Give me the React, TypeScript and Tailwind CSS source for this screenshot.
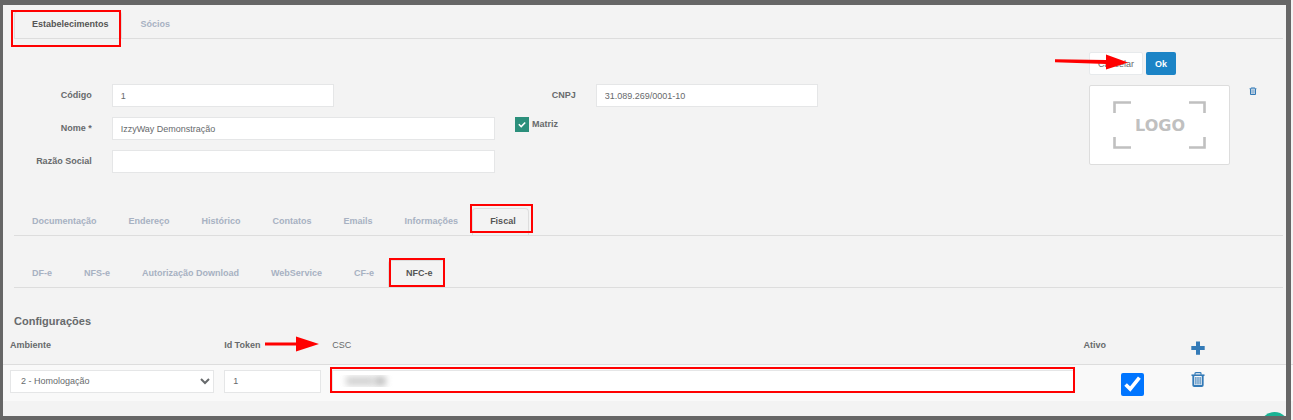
import type { ReactNode } from "react"

function TrashIcon({ className }: { className: string }) {
  return (
    <svg viewBox="0 0 14 15" className={className} fill="none" stroke="currentColor" aria-hidden="true">
      <path d="M4 2.8V1.4Q4 .7 4.8.7H9.2Q10 .7 10 1.4V2.8" strokeWidth="1.2" />
      <path d="M.5 3.2H13.5" strokeWidth="1.6" />
      <path d="M2.3 3.5V13.2Q2.3 14 3.2 14H10.8Q11.7 14 11.7 13.2V3.5" strokeWidth="1.9" />
      <path d="M4.9 5V12.6M7 5V12.6M9.1 5V12.6" strokeWidth="1.1" />
    </svg>
  )
}

function Highlight({ className }: { className: string }) {
  return <span className={`pointer-events-none absolute z-10 border-2 border-[#ff0000] ${className}`} />
}

type TabsProps = {
  label: string
  tabs: string[]
  active: string
  activeClass: string
  highlightClass: string
}

function TabBar({ label, tabs, active, activeClass, highlightClass }: TabsProps) {
  return (
    <div role="tablist" aria-label={label} className="ml-[11px] mr-[10px] flex border-b border-[#dddddd]">
      {tabs.map((tab) => (
        <button
          key={tab}
          type="button"
          role="tab"
          aria-selected={tab === active}
          className={`relative mr-px h-[27px] rounded-t-sm border border-b-0 pb-0.5 pl-[17px] pr-3 font-bold ${
            tab === active ? `border-[#dddddd] text-[#555555] ${activeClass}` : "border-transparent text-[#a7b1c2]"
          }`}
        >
          {tab}
          {tab === active && <Highlight className={highlightClass} />}
        </button>
      ))}
    </div>
  )
}

function Label({ htmlFor, children }: { htmlFor: string; children: ReactNode }) {
  return (
    <label htmlFor={htmlFor} className="whitespace-nowrap px-2.5 pt-[5px] text-right font-bold">
      {children}
    </label>
  )
}

const inputClass = "h-[23px] w-full border border-[#e5e6e7] bg-white px-2 outline-none"

export default function App() {
  return (
    <div className="relative overflow-hidden bg-[#f3f3f3] pb-[19px] pl-[3px] pt-[11px] font-['Liberation_Sans',Arial,sans-serif] text-[9px] leading-3 text-[#676a6c]">
      <TabBar
        label="Cadastro"
        tabs={["Estabelecimentos", "Sócios"]}
        active="Estabelecimentos"
        activeClass="-mb-px h-7 bg-[#f3f3f3]"
        highlightClass="-left-1 right-0 -top-0.5 h-[37px]"
      />

      <div className="ml-[18px] mr-2.5 mt-[13px] grid grid-cols-[968fr_294fr]">
        <div className="mt-8 grid grid-cols-12 content-start gap-y-2.5">
          <div className="flex justify-end">
            <Label htmlFor="codigo">Código</Label>
          </div>
          <div className="col-span-3 px-2.5">
            <input id="codigo" className={inputClass} defaultValue="1" />
          </div>
          <div className="col-start-7 flex justify-end">
            <Label htmlFor="cnpj">CNPJ</Label>
          </div>
          <div className="col-span-3 px-2.5">
            <input id="cnpj" className={inputClass} defaultValue="31.089.269/0001-10" />
          </div>

          <div className="col-start-1 flex justify-end">
            <Label htmlFor="nome">Nome *</Label>
          </div>
          <div className="col-span-5 px-2.5">
            <input id="nome" className={inputClass} defaultValue="IzzyWay Demonstração" />
          </div>
          <label className="col-span-2 flex items-start gap-[3px] px-2.5 font-bold">
            <span className="relative">
              <input type="checkbox" defaultChecked className="block h-[15px] w-3.5 appearance-none bg-[#2b8f7b]" />
              <svg viewBox="0 0 14 15" className="pointer-events-none absolute inset-0" fill="none" stroke="white" strokeWidth="1.5">
                <path d="M3.8 7.3 6.2 9.6 10.2 5.4" />
              </svg>
            </span>
            <span className="pt-px">Matriz</span>
          </label>

          <div className="col-start-1 flex justify-end">
            <Label htmlFor="razao">Razão Social</Label>
          </div>
          <div className="col-span-5 px-2.5">
            <input id="razao" className={inputClass} />
          </div>
        </div>

        <div className="pl-[100px]">
          <div className="relative flex gap-[3px]">
            <button type="button" className="h-[23px] rounded-xs border border-[#e7eaec] bg-white px-2">
              Cancelar
            </button>
            <button type="button" className="h-[23px] rounded-xs bg-[#1c84c6] px-[9px] font-bold text-white">
              Ok
            </button>
            <svg viewBox="0 0 76 16" className="pointer-events-none absolute -left-9 top-0.5 h-4 w-[76px]" fill="#ff0000">
              <path d="M2 5.2 53 6V.5L75 8.5 53 15.5V10L2 8.2Z" />
            </svg>
          </div>
          <div className="mt-2.5 flex items-start gap-[19px]">
            <div className="flex h-20 w-[141px] items-center justify-center rounded-xs border border-[#dddddd] bg-white">
              <svg viewBox="0 0 94 48" className="h-12 w-[94px]" role="img" aria-label="LOGO">
                <path
                  d="M1.5 12V1.5H18M76 1.5H91.5V12M91.5 36V46.5H76M18 46.5H1.5V36"
                  fill="none"
                  stroke="#c0c0c0"
                  strokeWidth="2.6"
                />
                <text
                  x="47"
                  y="30"
                  textAnchor="middle"
                  className="font-['DejaVu_Sans',sans-serif] text-[16px] font-bold"
                  fill="#c0c0c0"
                >
                  LOGO
                </text>
              </svg>
            </div>
            <button type="button" aria-label="Remover logo" className="mt-0.5 text-[#337ab7]">
              <TrashIcon className="h-2 w-2" />
            </button>
          </div>
        </div>
      </div>

      <div className="mt-[35px]">
        <TabBar
          label="Dados"
          tabs={["Documentação", "Endereço", "Histórico", "Contatos", "Emails", "Informações", "Fiscal"]}
          active="Fiscal"
          activeClass=""
          highlightClass="-left-[3px] -right-[5px] -top-[5px] h-[29px]"
        />
      </div>
      <div className="mt-6">
        <TabBar
          label="Fiscal"
          tabs={["DF-e", "NFS-e", "Autorização Download", "WebService", "CF-e", "NFC-e"]}
          active="NFC-e"
          activeClass=""
          highlightClass="left-0 -right-px -top-[3px] h-[29px]"
        />
      </div>

      <h2 className="ml-[11px] mt-[25px] text-[11px] font-bold leading-4">Configurações</h2>

      <table className="w-full table-fixed border-collapse text-left">
        <colgroup>
          <col className="w-[16.6%]" />
          <col className="w-[8.3%]" />
          <col />
          <col className="w-[8.3%]" />
          <col className="w-[8.4%]" />
        </colgroup>
        <thead>
          <tr className="h-[35px] border-b border-[#dddddd] align-top">
            <th className="pl-[7px] pt-2.5">Ambiente</th>
            <th className="relative pl-[7px] pt-2.5">
              Id Token
              <svg viewBox="0 0 54 16" className="pointer-events-none absolute left-12 top-[7px] h-4 w-[54px]" fill="#ff0000">
                <path d="M0 6.5H31V.5L54 8 31 15.5V9.5H0Z" />
              </svg>
            </th>
            <th className="pl-2 pt-2.5 font-normal">CSC</th>
            <th className="pl-1.5 pt-2.5">Ativo</th>
            <th className="pl-1.5 pt-3">
              <button type="button" aria-label="Adicionar" className="block text-[#337ab7]">
                <svg viewBox="0 0 14 14" className="h-3.5 w-3.5" fill="currentColor">
                  <path d="M5 .5h4V5h4.7v4H9v4.7H5V9H.3V5H5z" />
                </svg>
              </button>
            </th>
          </tr>
        </thead>
        <tbody>
          <tr className="h-[37px] bg-[#f9f9f9] align-top">
            <td className="pl-[7px] pr-[3px] pt-[5px]">
              <select aria-label="Ambiente" className="h-[23px] w-full border border-[#e5e6e7] bg-white px-1.5 outline-none">
                <option>2 - Homologação</option>
              </select>
            </td>
            <td className="pl-[7px] pr-[3px] pt-[5px]">
              <input aria-label="Id Token" className={inputClass} defaultValue="1" />
            </td>
            <td className="relative pl-2 pr-[3px] pt-[5px]">
              <input aria-label="CSC" type="text" className={inputClass} />
              <span className="pointer-events-none absolute left-4 top-2.5 flex h-3 w-14 items-center overflow-hidden">
                <span className="ml-1.5 h-2.5 w-7 bg-[#d4d4d4] blur-[3px]" />
                <span className="h-2.5 w-3 bg-[#c4c4c4] blur-[3px]" />
              </span>
              <Highlight className="left-1.5 right-[3px] top-0.5 h-[26px]" />
            </td>
            <td className="pt-2">
              <input aria-label="Ativo" type="checkbox" defaultChecked className="ml-[43px] block h-[23px] w-[23px]" />
            </td>
            <td className="pl-1.5 pt-[7px]">
              <button type="button" aria-label="Excluir" className="block text-[#337ab7]">
                <TrashIcon className="h-[15px] w-3.5" />
              </button>
            </td>
          </tr>
        </tbody>
      </table>

      <button
        type="button"
        aria-label="Ajuda"
        className="absolute -bottom-[21px] right-1 h-[29px] w-[29px] rounded-full bg-[#1ab394]"
      />
      {/* screen frame */}
      <div className="pointer-events-none absolute inset-y-0 left-0 right-0.5 border-b-4 border-l-[3px] border-r-[5px] border-t-[5px] border-[#666666]" />
    </div>
  )
}
